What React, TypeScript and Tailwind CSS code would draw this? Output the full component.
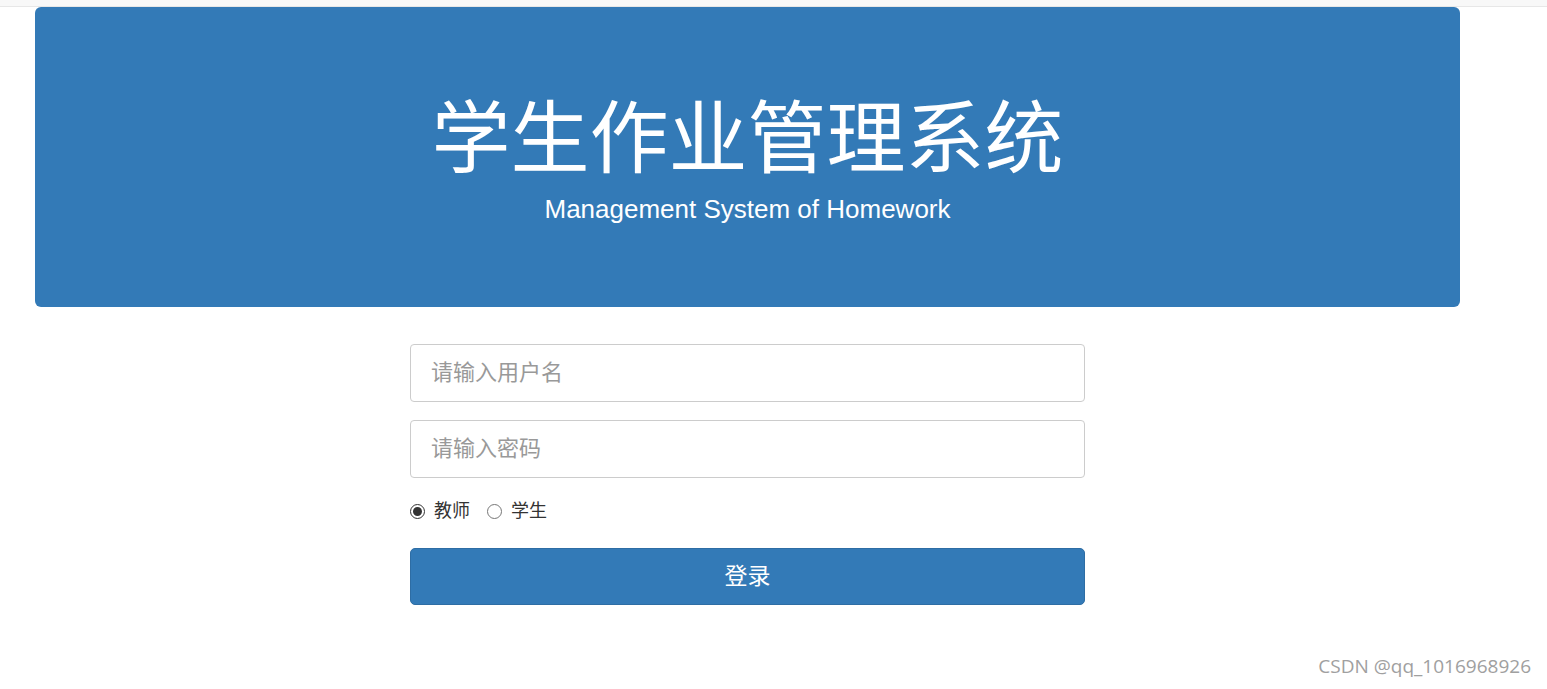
import React, { useState } from 'react'

export default function App() {
  const [role, setRole] = useState<'teacher' | 'student'>('teacher')

  return (
    <div className="relative min-h-[689px] w-[1547px] bg-white font-['Liberation_Sans','Noto_Sans_CJK_SC',sans-serif]">
      {/* 顶部条 */}
      <div className="h-[7px] bg-[#f8f8f8] border-b border-[#e7e7e7]" />

      {/* 标题区 */}
      <div className="ml-[35px] w-[1425px] h-[300px] rounded-[6px] bg-[#337ab7] flex flex-col items-center pt-[83px] text-white">
        <h1 className="text-[79px] leading-[100px] font-normal">学生作业管理系统</h1>
        <p className="mt-[3px] text-[26px] leading-[32px]">Management System of Homework</p>
      </div>

      {/* 登录表单 */}
      <form className="ml-[410px] w-[675px] mt-[37px] flex flex-col" onSubmit={(e) => e.preventDefault()}>
        <input
          type="text"
          placeholder="请输入用户名"
          className="h-[58px] rounded-[4px] border border-[#ccc] px-[20px] text-[22px] text-[#555] placeholder:text-[#999] outline-none"
        />
        <input
          type="password"
          placeholder="请输入密码"
          className="mt-[18px] h-[58px] rounded-[4px] border border-[#ccc] px-[20px] text-[22px] text-[#555] placeholder:text-[#999] outline-none"
        />

        <div className="mt-[21px] flex items-center gap-[17px] text-[18px] text-[#333] leading-[24px]">
          <label className="flex items-center gap-[9px]">
            <input
              type="radio"
              name="role"
              checked={role === 'teacher'}
              onChange={() => setRole('teacher')}
              className="m-0 w-[15px] h-[15px] accent-[#333]"
            />
            教师
          </label>
          <label className="flex items-center gap-[9px]">
            <input
              type="radio"
              name="role"
              checked={role === 'student'}
              onChange={() => setRole('student')}
              className="m-0 w-[15px] h-[15px] accent-[#333]"
            />
            学生
          </label>
        </div>

        <button
          type="submit"
          className="mt-[25px] h-[57px] rounded-[5px] border border-[#2e6da4] bg-[#337ab7] text-white text-[23px]"
        >
          登录
        </button>
      </form>

      <div className="absolute right-[16px] bottom-[9px] text-[19px] text-[#a0a0a0] font-['Open_Sans','Noto_Sans',sans-serif]">
        CSDN @qq_1016968926
      </div>
    </div>
  )
}
